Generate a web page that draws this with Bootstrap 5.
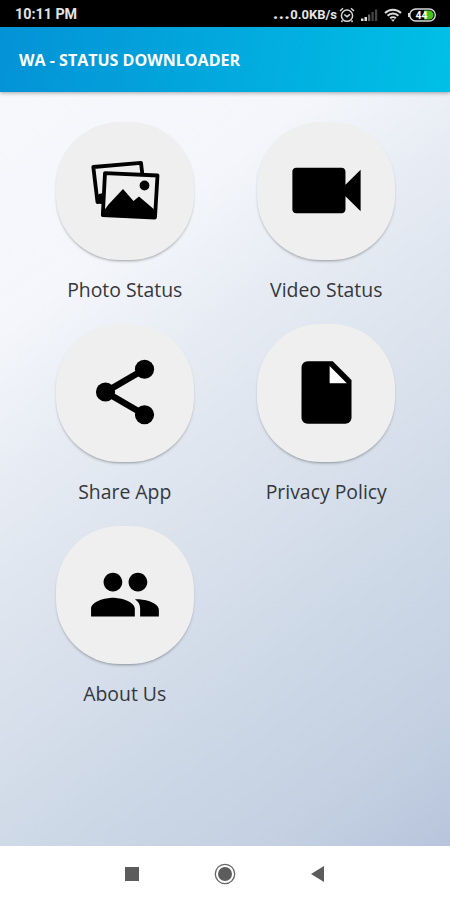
<!DOCTYPE html>
<html lang="en">
<head>
<meta charset="utf-8">
<meta name="viewport" content="width=device-width, initial-scale=1">
<title>WA - Status Downloader</title>
<link rel="stylesheet" href="https://cdn.jsdelivr.net/npm/bootstrap@5.3.0/dist/css/bootstrap.min.css">
<style>
body { font-family: "Open Sans", "Noto Sans", sans-serif; height: 900px; }
.statusbar { height: 27px; background: #000; color: #e4e4e4; font: 700 14px/27px Roboto, sans-serif; padding: 2px 13px 0 15px; }
.clock { font-size: 14.300px; }
.speed { font-size: 13px; margin-right: 2px; }
.speed-dots { font-weight: 900; font-size: 17px; line-height: 1; margin: -3px 0 0; letter-spacing: .6px; }
.status-icons { gap: 5px; }
.appbar { height: 65px; padding: 2px 19px 0; background: linear-gradient(100deg, #0492d6, #00c0e6); box-shadow: 0 1px 4px rgba(0,0,0,.35); z-index: 1; }
.appbar h1 { font-size: 16.050px; font-weight: 700; }
.screen { padding: 30px 23px 0 24px; background: linear-gradient(143deg, #f7f8fc 0%, #f4f6fb 22%, #e6ebf3 37%, #d9e1ec 55%, #cad6e5 76%, #c5d1e2 87%, #b7c4dc 100%); }
.tile { height: 202px; color: #34373c; }
.disc { width: 138px; height: 138px; border-radius: 64px; background: #efefef; box-shadow: 0 2px 3px -1px rgba(0,0,0,.36); color: #000; }
.disc-lift { padding-bottom: 2px; }
.tile-label { font-size: 19.400px; line-height: 26px; margin-top: 17px; white-space: nowrap; font-weight: 400; }
.navkeys { height: 54px; background: #fff; padding: 1px 125px 0; }
</style>
</head>
<body class="d-flex flex-column overflow-hidden">
<header class="statusbar d-flex align-items-center justify-content-between flex-shrink-0">
  <span class="clock">10:11 PM</span>
  <div class="status-icons d-flex align-items-center">
    <div class="d-flex align-items-center"><span class="speed-dots">...</span><span class="speed">0.0KB/s</span>
    <svg width="16" height="16" viewBox="0 0 16 16" fill="none" stroke="#d5d5d5" stroke-width="1.5"><circle cx="8" cy="8.7" r="5.6"/><path d="M1 4 4 1.3M15 4 12 1.3M3.5 13.5 2.5 15M12.500 13.500 13.500 15M5.300 7.500 8 9.700 11 7.300"/></svg></div>
    <svg width="19" height="14" viewBox="0 0 19 14"><path fill="#ddd" d="M1 10.500h2.500V13H1zM4.500 9H7v4H4.500z"/><path fill="#666" d="M8 6.500h2.200V13H8z"/><path fill="#444" d="M11.500 4h2.200v9h-2.200zM15 1.500h2.200V13H15z"/></svg>
    <svg width="18" height="14" viewBox="0 0 18 14" fill="none" stroke="#ddd" stroke-width="2"><path d="M1 5a11.500 11.500 0 0 1 16 0M3.600 7.800a7.700 7.700 0 0 1 10.800 0M6.200 10.300a4 4 0 0 1 5.600 0"/><path fill="#ddd" stroke="none" d="M7 11.500h4L9 13.800z"/></svg>
    <svg width="30" height="14" viewBox="0 0 30 14"><rect x="2.800" y="1" width="25.500" height="12" rx="6" fill="#000" stroke="#d8d8d8" stroke-width="1.400"/><path fill="#d8d8d8" d="M1 5h2v4H1z"/><path fill="#45c31c" d="M17 2.500h5a4.500 4.500 0 0 1 0 9h-5z"/><text x="8.500" y="10.800" font-family="Roboto,sans-serif" font-size="10.500" font-weight="700" fill="#fff">44</text></svg>
  </div>
</header>
<nav class="appbar d-flex align-items-center flex-shrink-0 position-relative"><h1 class="text-white m-0">WA - STATUS DOWNLOADER</h1></nav>
<main class="screen flex-grow-1">
  <div class="row g-0">
    <div class="col-6 tile d-flex flex-column align-items-center">
      <div class="disc d-flex align-items-center justify-content-center">
        <svg width="70" height="62" viewBox="0 0 70 62"><g fill="none" stroke="#000" stroke-width="3.800" stroke-linejoin="round"><path d="M13 40.500 7.500 42 3.300 7 51 2.800 52.300 14"/><path d="M15 13.200 67.500 15.500 65 57.500 12.800 55z"/></g><path d="m5.500 38 3.500-4 4-1-1 11-5-.500zM13 52 18.500 44.500 33 29 43.500 41 49 36.500 66 51 65 57.500 13 55z"/><circle cx="54.500" cy="25.500" r="4.900"/></svg>
      </div>
      <div class="tile-label">Photo Status</div>
    </div>
    <div class="col-6 tile d-flex flex-column align-items-center">
      <div class="disc disc-lift d-flex align-items-center justify-content-center">
        <svg width="91" height="91" viewBox="0 0 24 24"><path d="M17 10.500V7c0-.55-.45-1-1-1H4c-.55 0-1 .45-1 1v10c0 .55.45 1 1 1h12c.55 0 1-.45 1-1v-3.500l4 4v-11l-4 4z"/></svg>
      </div>
      <div class="tile-label">Video Status</div>
    </div>
    <div class="col-6 tile d-flex flex-column align-items-center">
      <div class="disc disc-lift d-flex align-items-center justify-content-center">
        <svg width="78" height="78" viewBox="0 0 24 24"><path d="M18 5 6 12l12 7" fill="none" stroke="#000" stroke-width="2"/><circle cx="18" cy="5" r="2.950"/><circle cx="6" cy="12" r="2.950"/><circle cx="18" cy="19" r="2.950"/></svg>
      </div>
      <div class="tile-label">Share App</div>
    </div>
    <div class="col-6 tile d-flex flex-column align-items-center">
      <div class="disc disc-lift d-flex align-items-center justify-content-center">
        <svg width="75" height="75" viewBox="0 0 24 24"><path fill="#fff" d="M13 3.500V9h5.500z"/><path d="M6 2c-1.100 0-1.990.9-1.990 2L4 20c0 1.100.89 2 1.990 2H18c1.100 0 2-.9 2-2V8l-6-6H6zm7 7V3.500L18.500 9H13z"/></svg>
      </div>
      <div class="tile-label">Privacy Policy</div>
    </div>
    <div class="col-6 tile d-flex flex-column align-items-center">
      <div class="disc disc-lift d-flex align-items-center justify-content-center">
        <svg width="75" height="75" viewBox="0 0 24 24"><path d="M16.300 11c1.660 0 2.990-1.340 2.990-3s-1.330-3-2.990-3-3 1.340-3 3 1.340 3 3 3zm-8 0c1.660 0 2.990-1.340 2.990-3S9.960 5 8.300 5s-3 1.340-3 3 1.340 3 3 3zm0 2c-2.330 0-7 1.170-7 3.500V19h14v-2.500c0-2.330-4.670-3.500-7-3.500zm8 .5c-.29 0-.62.02-.97.05 1.160.84 1.670 1.670 1.670 3V19h6v-2.100c0-2.230-4.370-3.400-6.700-3.400z"/></svg>
      </div>
      <div class="tile-label">About Us</div>
    </div>
  </div>
</main>
<footer class="navkeys d-flex align-items-center justify-content-between flex-shrink-0">
  <svg width="14" height="14"><path fill="#5c5c5c" d="M0 0h14v14H0z"/></svg>
  <svg width="22" height="22"><circle cx="11" cy="11" r="9.700" fill="none" stroke="#666" stroke-width="1.300"/><circle cx="11" cy="11" r="7" fill="#5c5c5c"/></svg>
  <svg width="14" height="16"><path fill="#5c5c5c" d="M13 0v16L0 8z"/></svg>
</footer>
<script src="https://cdn.jsdelivr.net/npm/bootstrap@5.3.0/dist/js/bootstrap.bundle.min.js"></script>
</body>
</html>
